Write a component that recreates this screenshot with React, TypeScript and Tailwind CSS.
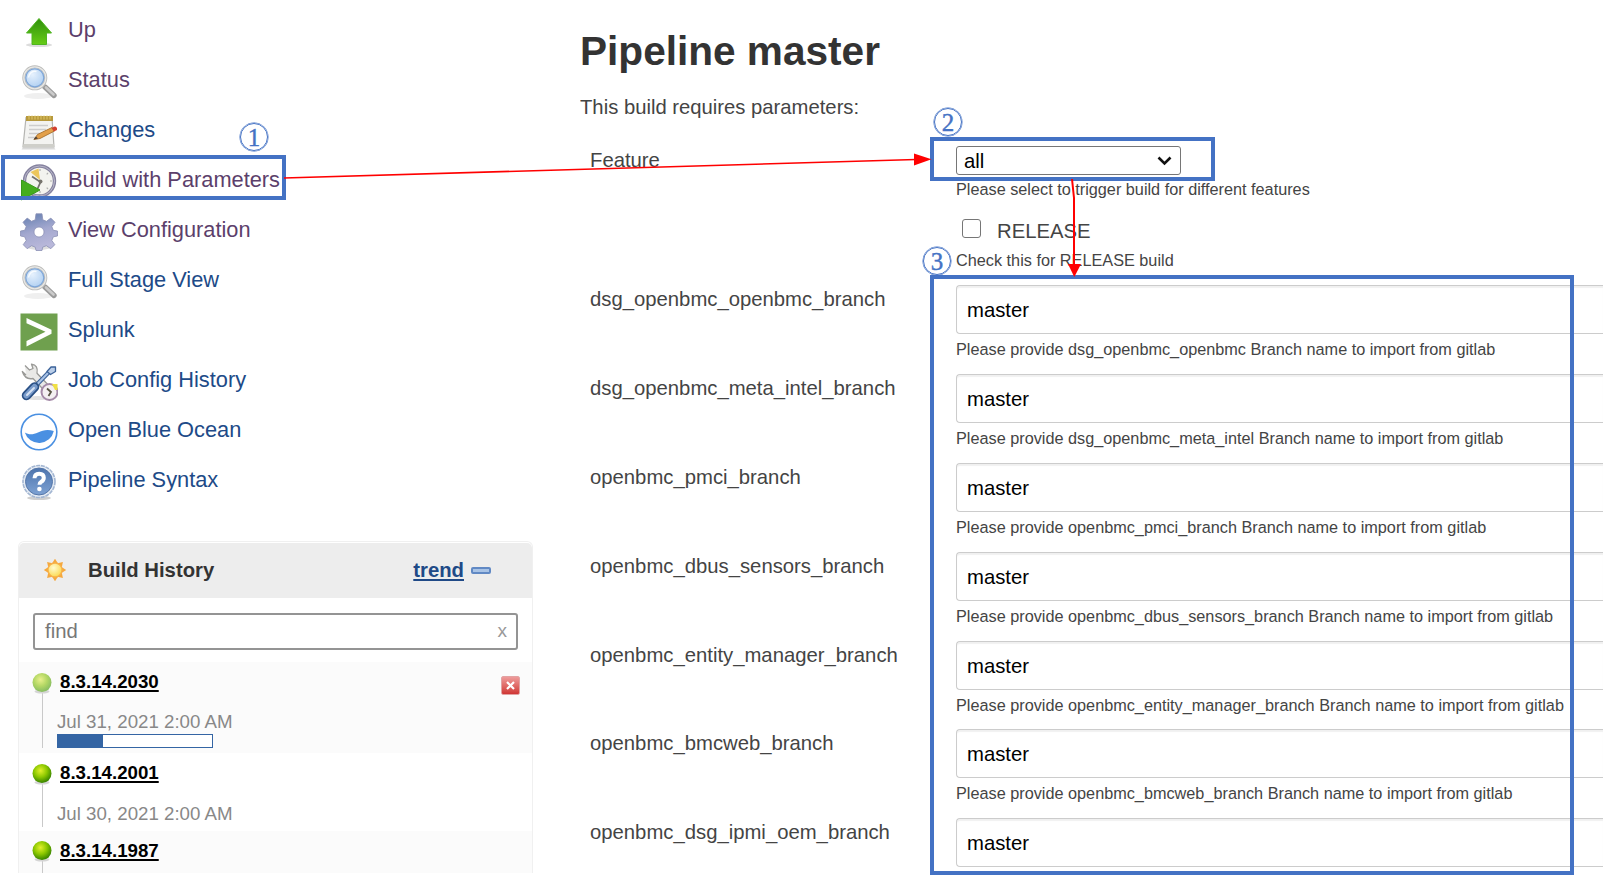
import React from 'react';

function UpIcon() {
  return (
    <svg width="38" height="38" viewBox="0 0 38 38">
      <defs>
        <linearGradient id="up" x1="0" y1="0" x2="0" y2="1">
          <stop offset="0" stopColor="#2f8f0c" />
          <stop offset="1" stopColor="#66cc16" />
        </linearGradient>
      </defs>
      <ellipse cx="19" cy="32" rx="13" ry="2" fill="#dcdcdc" />
      <path d="M19 5.5 31.5 20H26.5V31.5H12V20H6.5Z" fill="url(#up)" stroke="#4fb521" strokeWidth="1" strokeLinejoin="round" />
    </svg>
  );
}

function SearchIcon() {
  return (
    <svg width="38" height="38" viewBox="0 0 38 38">
      <defs>
        <radialGradient id="lens" cx="0.4" cy="0.35" r="0.7">
          <stop offset="0" stopColor="#e6f1fd" />
          <stop offset="1" stopColor="#a9cbf0" />
        </radialGradient>
      </defs>
      <ellipse cx="18" cy="33" rx="14" ry="3" fill="#efefef" />
      <path d="M25 24 34 32.500" stroke="#9b9b9b" strokeWidth="5.400" strokeLinecap="round" />
      <path d="M26 24.500 33.500 31.500" stroke="#cbcbcb" strokeWidth="2.600" strokeLinecap="round" />
      <circle cx="14.800" cy="14.800" r="11" fill="url(#lens)" stroke="#bcbcba" strokeWidth="3" />
      <circle cx="14.800" cy="14.800" r="11" fill="none" stroke="#e8e8e6" strokeWidth="1.300" />
      <circle cx="14.800" cy="14.800" r="9" fill="none" stroke="#7ea6d8" strokeWidth="1.200" />
      <path d="M8.500 14.500a6.500 6.500 0 0 1 8-6" fill="none" stroke="#fff" strokeWidth="1.500" opacity="0.8" />
    </svg>
  );
}

function NotepadIcon() {
  return (
    <svg width="38" height="38" viewBox="0 0 38 38">
      <path d="M3 34.500h31l1.500 2h-34z" fill="#d9d9d9" />
      <path d="M6 4.500h26l2 29.500h-31z" fill="#f3f3f1" stroke="#b5b5b2" strokeWidth="1.200" />
      <path d="M3.500 31h30.500v3H3z" fill="#cfcfca" />
      <path d="M6 3h27v5h-27z" fill="#b7993c" />
      <path d="M9 2.500v4M12 2.500v4M15 2.500v4M18 2.500v4M21 2.500v4M24 2.500v4M27 2.500v4M30 2.500v4" stroke="#e0c768" strokeWidth="1" />
      <path d="M9 12.500h19M9 16.500h17M9 20.500h11M8 24.500h7" stroke="#cdcdcd" strokeWidth="1.300" />
      <path d="M14 26.500 17.500 21.500 32 14.500 34.500 18 20 25.500Z" fill="#e3a04a" stroke="#a8702c" strokeWidth="0.900" />
      <path d="M31.500 15 34.500 13.500q3 0 2.500 3.500L34 18.500Z" fill="#d2402f" />
      <path d="M13.500 26.500 16 23.500 18 25.500Z" fill="#4d4037" />
    </svg>
  );
}

function ClockIcon() {
  return (
    <svg width="38" height="38" viewBox="0 0 38 38">
      <ellipse cx="21" cy="34.500" rx="13" ry="2.500" fill="#d9d9d9" />
      <circle cx="19.500" cy="18" r="15" fill="#f3f3ef" stroke="#85829f" strokeWidth="3.400" />
      <circle cx="19.500" cy="18" r="15" fill="none" stroke="#b9b7ca" strokeWidth="1" />
      <path d="M20 17 10.500 9 18.500 5.500Z" fill="#ecc65b" />
      <path d="M12 13.500 20.500 19 17 27" fill="none" stroke="#75736f" strokeWidth="1.800" />
      <circle cx="20.500" cy="18.500" r="2" fill="#77746e" />
      <path d="M20 6v2M32 18h-2M20 30v-2M28 10l-1.300 1.300M28 26l-1.300-1.300" stroke="#b0b0ae" strokeWidth="1.200" />
      <path d="M1.500 17 20 27 1.500 37Z" fill="#45ad1e" stroke="#3a9a1c" strokeWidth="1" />
    </svg>
  );
}

function GearIcon() {
  return (
    <svg width="38" height="38" viewBox="0 0 38 38">
      <defs>
        <linearGradient id="gear" x1="0" y1="0" x2="0.300" y2="1">
          <stop offset="0" stopColor="#5f7cae" />
          <stop offset="0.550" stopColor="#a3a8cf" />
          <stop offset="1" stopColor="#b9b8da" />
        </linearGradient>
      </defs>
      <ellipse cx="19" cy="34" rx="12" ry="3" fill="#dedede" />
      <path
        fill="url(#gear)"
        fillRule="evenodd"
        stroke="#8b90b5"
        strokeWidth="0.800"
        strokeLinejoin="round"
        d="M16 .8h6l.8 6 3.700 1.500 4.300-3.200 4.200 4.200-3.200 4.300 1.500 3.700 4.200.7v5l-4.200.8-1.500 3.700 3 4.200-4 4-4.400-3-3.700 1.400-.7 3.400h-6l-.8-3.400-3.700-1.400-4.300 3-4-4 3-4.200-1.500-3.700-4.200-.8v-5l4.200-.7 1.500-3.700L3 9.300l4.200-4.200 4.300 3.200 3.700-1.500ZM19 14a5 5 0 1 0 .01 0Z"
      />
    </svg>
  );
}

function SplunkIcon() {
  return (
    <svg width="38" height="38" viewBox="0 0 38 38">
      <rect x="0.500" y="0.500" width="37" height="37" fill="#6fa04e" />
      <path d="M6.500 5 31.500 16.800V20.800L6.500 33.500V28L25.500 18.800 6.500 10.300Z" fill="#fff" />
    </svg>
  );
}

function ToolsIcon() {
  return (
    <svg width="38" height="38" viewBox="0 0 38 38">
      <ellipse cx="18" cy="35" rx="12" ry="2" fill="#e2e2e2" />
      <path
        d="M5 2.500 9.500 7 13 5.500 11.500 1.200q7 1 5.500 9L33 27 28.500 32 13 15.500Q5 17 2.300 8.500L6 12"
        fill="#e9e9e7"
        stroke="#9a9a97"
        strokeWidth="1.300"
        strokeLinejoin="round"
      />
      <path d="M16 22.500 29 9" stroke="#3b6299" strokeWidth="4.200" />
      <path d="M16 22.500 29 9" stroke="#a9c3e6" strokeWidth="2" />
      <path d="M27 8.500 31 4 35.500 4 35.500 8.500 30.500 11.500Z" fill="#b9cde8" stroke="#3b6299" strokeWidth="1.300" strokeLinejoin="round" />
      <path d="M6.500 32.500 14.500 24" stroke="#2b5186" strokeWidth="9.500" strokeLinecap="round" />
      <path d="M6.500 32.500 14.500 24" stroke="#7a9ccb" strokeWidth="6" strokeLinecap="round" />
      <path d="M7 32 14 25" stroke="#d5e1f2" strokeWidth="2" strokeLinecap="round" />
      <circle cx="29.500" cy="29" r="8" fill="#f4f0f2" stroke="#a48aa8" strokeWidth="2" />
      <path d="M32 21h5.500v6h-2.500z" fill="#f0e045" />
      <path d="M27 25.500 31 29 28.500 33" fill="none" stroke="#5a5646" strokeWidth="1.800" />
    </svg>
  );
}

function OceanIcon() {
  return (
    <svg width="38" height="38" viewBox="0 0 38 38">
      <circle cx="19" cy="19" r="17.800" fill="#fff" stroke="#4a90e2" strokeWidth="1.600" />
      <path d="M4.800 19.500C9 22 13 21.700 18 19.500c5-2.600 10-3.500 15.800-1.500A15 15 0 0 1 4.800 19.500Z" fill="#4a90e2" />
    </svg>
  );
}

function HelpIcon() {
  return (
    <svg width="38" height="38" viewBox="0 0 38 38">
      <defs>
        <linearGradient id="help" x1="0" y1="0" x2="0" y2="1">
          <stop offset="0" stopColor="#4d74ad" />
          <stop offset="1" stopColor="#7ea2d3" />
        </linearGradient>
      </defs>
      <ellipse cx="19" cy="35" rx="12" ry="2" fill="#cfcfcf" />
      <circle cx="19" cy="18.500" r="16" fill="#e7edf5" stroke="#a3b6d2" strokeWidth="1.600" strokeDasharray="4 0.800" />
      <circle cx="19" cy="18.500" r="13.500" fill="url(#help)" stroke="#5576a8" strokeWidth="1" />
      <path d="M14.500 15.300q0-4.600 4.700-4.600 4.600 0 4.600 4 0 2.600-2.500 4-1.800 1-1.800 3" fill="none" stroke="#fff" strokeWidth="4" />
      <circle cx="19.400" cy="26" r="2.300" fill="#fff" />
    </svg>
  );
}

function SunIcon() {
  const angles = [0, 45, 90, 135, 180, 225, 270, 315];
  return (
    <svg width="24" height="24" viewBox="0 0 24 24">
      <defs>
        <radialGradient id="sun" cx="0.400" cy="0.350" r="0.700">
          <stop offset="0" stopColor="#fffbd0" />
          <stop offset="1" stopColor="#fbd84a" />
        </radialGradient>
      </defs>
      {angles.map((a) => (
        <path key={a} d="M9 5.500 12 .8 15 5.500Z" fill="#f5a83c" transform={`rotate(${a} 12 12)`} />
      ))}
      <circle cx="12" cy="12" r="7" fill="url(#sun)" stroke="#f7b04a" strokeWidth="1.300" />
    </svg>
  );
}

function Ball({ faded = false }: { faded?: boolean }) {
  const id = faded ? 'ball-faded' : 'ball';
  return (
    <svg className="relative shrink-0" width="20" height="22" viewBox="0 0 20 22">
      <defs>
        <radialGradient id={id} cx="0.420" cy="0.350" r="0.620">
          <stop offset="0" stopColor={faded ? '#e9f08c' : '#e2f02c'} />
          <stop offset="0.550" stopColor={faded ? '#b4d865' : '#8cc800'} />
          <stop offset="1" stopColor={faded ? '#8bbf62' : '#3f8a00'} />
        </radialGradient>
      </defs>
      <ellipse cx="10" cy="19.500" rx="7.500" ry="2" fill="#d5d5d5" />
      <circle cx="10" cy="10.500" r="9.500" fill={`url(#${id})`} />
    </svg>
  );
}

const NAV = [
  { label: 'Up', icon: <UpIcon />, visited: true },
  { label: 'Status', icon: <SearchIcon />, visited: true },
  { label: 'Changes', icon: <NotepadIcon />, visited: false },
  { label: 'Build with Parameters', icon: <ClockIcon />, visited: true },
  { label: 'View Configuration', icon: <GearIcon />, visited: true },
  { label: 'Full Stage View', icon: <SearchIcon />, visited: false },
  { label: 'Splunk', icon: <SplunkIcon />, visited: false },
  { label: 'Job Config History', icon: <ToolsIcon />, visited: false },
  { label: 'Open Blue Ocean', icon: <OceanIcon />, visited: false },
  { label: 'Pipeline Syntax', icon: <HelpIcon />, visited: false },
];

const BRANCHES = [
  { label: 'dsg_openbmc_openbmc_branch', help: 'dsg_openbmc_openbmc' },
  { label: 'dsg_openbmc_meta_intel_branch', help: 'dsg_openbmc_meta_intel' },
  { label: 'openbmc_pmci_branch', help: 'openbmc_pmci_branch' },
  { label: 'openbmc_dbus_sensors_branch', help: 'openbmc_dbus_sensors_branch' },
  { label: 'openbmc_entity_manager_branch', help: 'openbmc_entity_manager_branch' },
  { label: 'openbmc_bmcweb_branch', help: 'openbmc_bmcweb_branch' },
  { label: 'openbmc_dsg_ipmi_oem_branch', help: null },
];

const BUILD_LINK =
  'block text-[18.7px] leading-6 font-bold text-black underline decoration-[1.500px] underline-offset-2';

function Sidebar() {
  return (
    <aside className="w-[580px] shrink-0">
      <nav className="flex flex-col pt-[5px]">
        {NAV.map((n) => (
          <a key={n.label} className="flex h-[49.96px] items-center pl-5">
            <span className="mt-[5px] block size-[38px]">{n.icon}</span>
            <span
              className={
                'pl-[10px] text-[21.8px] leading-[50px] whitespace-nowrap ' +
                (n.visited ? 'text-[#5c3f6b]' : 'text-[#204a87]')
              }
            >
              {n.label}
            </span>
          </a>
        ))}
      </nav>

      <section className="mt-[36px] ml-[18px] w-[515px] overflow-hidden rounded-t-md border border-b-0 border-[#f0f0f0] pt-px">
        <header className="flex h-[55px] items-center rounded-t-[5px] bg-[#ededed] pl-[24px]">
          <SunIcon />
          <h2 className="pl-[21px] text-[20.3px] leading-6 font-bold text-[#333]">Build History</h2>
          <div className="ml-auto flex items-center pr-[41px]">
            <a className="text-[20.3px] leading-6 font-bold text-[#204a87] underline decoration-[1.500px] underline-offset-2">trend</a>
            <span className="ml-[7px] block h-[7px] w-[20px] rounded-[2px] border-2 border-[#6189c4] bg-[#a8c3e6]" />
          </div>
        </header>
        <div className="flex h-[64px] items-center px-[14px]">
          <div className="mt-[3px] flex h-[37px] w-full items-center justify-between rounded-[3px] border-2 border-[#949494] bg-white pr-[9px] pl-[10px]">
            <span className="text-[20.3px] leading-6 text-[#777]">find</span>
            <span className="text-[19px] leading-6 text-[#999]">x</span>
          </div>
        </div>

        <div className="flex h-[91px] bg-[#fbfbfb] pl-[13px]">
          <div className="flex w-5 flex-col items-center pt-[10px]">
            <Ball faded />
            <span className="-mt-[3px] h-[57px] w-px bg-[#c9c9c9]" />
          </div>
          <div className="pl-[5px]">
            <a className={BUILD_LINK + ' mt-[8px] ml-[3px]'}>8.3.14.2030</a>
            <div className="mt-[16px] text-[18.7px] leading-6 whitespace-nowrap text-[#888]">Jul 31, 2021 2:00 AM</div>
            <div className="flex h-[14px] w-[156px] border border-[#3465a4] bg-white">
              <span className="block w-[45px] bg-[#3465a4]" />
            </div>
          </div>
          <span className="mt-[14px] mr-[12px] ml-auto flex size-[19px] items-center justify-center rounded-[2px] border border-[#e2a3a3] bg-linear-to-b from-[#ee9a9a] to-[#cf3434]">
            <svg width="11" height="11" viewBox="0 0 11 11">
              <path d="M2 2 9 9M9 2 2 9" stroke="#fff" strokeWidth="2.200" />
            </svg>
          </span>
        </div>

        <div className="flex h-[78px] bg-white pl-[13px]">
          <div className="flex w-5 flex-col items-center pt-[10px]">
            <Ball />
            <span className="-mt-[2px] h-[44px] w-px bg-[#c9c9c9]" />
          </div>
          <div className="pl-[5px]">
            <a className={BUILD_LINK + ' mt-[8px] ml-[3px]'}>8.3.14.2001</a>
            <div className="mt-[17px] text-[18.7px] leading-6 whitespace-nowrap text-[#888]">Jul 30, 2021 2:00 AM</div>
          </div>
        </div>

        <div className="flex h-[42px] bg-[#fbfbfb] pl-[13px]">
          <div className="flex w-5 flex-col items-center pt-[9px]">
            <Ball />
            <span className="-mt-[2px] h-[14px] w-px shrink-0 bg-[#c9c9c9]" />
          </div>
          <a className={BUILD_LINK + ' mt-[8px] ml-[8px]'}>8.3.14.1987</a>
        </div>
      </section>
    </aside>
  );
}

function Main() {
  return (
    <main className="min-w-0 flex-1 overflow-hidden pt-[26px] text-[#444]">
      <h1 className="text-[40.6px] leading-[50px] font-bold whitespace-nowrap text-[#333]">Pipeline master</h1>
      <p className="mt-[19px] text-[20.25px] leading-6">This build requires parameters:</p>

      <div className="mt-[27px] flex h-[139px] pl-[10px]">
        <div className="w-[366px] shrink-0 pt-[2px] text-[20.3px] leading-6">Feature</div>
        <div className="flex-1">
          <div className="flex h-[29px] w-[225px] items-center justify-between rounded-[3px] border border-[#767676] bg-white pr-[8px] pl-[7px] text-black">
            <span className="text-[20.3px] leading-6">all</span>
            <svg width="15" height="10" viewBox="0 0 15 10">
              <path d="M1.500 1.500 7.500 7.500 13.500 1.500" fill="none" stroke="#111" strokeWidth="2.600" />
            </svg>
          </div>
          <div className="mt-[4px] text-[16.25px] leading-5 whitespace-nowrap">Please select to trigger build for different features</div>
          <div className="mt-[17px] flex h-[30px] items-center pl-[6px]">
            <span className="mb-[6px] block size-[19px] rounded-[3px] border-[1.500px] border-[#767676] bg-white" />
            <span className="pl-4 text-[20.3px] leading-[30px]">RELEASE</span>
          </div>
          <div className="mt-[4px] text-[16.25px] leading-5 whitespace-nowrap">Check this for RELEASE build</div>
        </div>
      </div>

      {BRANCHES.map(({ label, help }) => (
        <div key={label} className="flex h-[88.9px] pl-[10px]">
          <div className="w-[366px] shrink-0 pt-[2px] text-[20.3px] leading-6">{label}</div>
          <div className="min-w-0 flex-1">
            <div className="flex h-[49px] items-center rounded-l-[4px] border border-r-0 border-[#ccc] bg-white pt-[1.500px] pl-[10px] text-[20.3px] text-black shadow-[inset_0_2px_1px_rgba(0,0,0,0.06)]">
              master
            </div>
            {help && (
              <div className="mt-[5px] text-[16.25px] leading-5 whitespace-nowrap">
                Please provide {help} Branch name to import from gitlab
              </div>
            )}
          </div>
        </div>
      ))}
    </main>
  );
}

const BADGE =
  'absolute flex size-[28px] items-center justify-center rounded-full border border-[#4472c4] font-["Liberation_Serif",serif] text-[25px] leading-none text-[#4472c4] shadow-[0_0_0_0.5px_#4472c4] [-webkit-text-stroke:0.4px_#4472c4]';

function Annotations() {
  return (
    <>
      <div className="absolute top-[155px] left-[1px] h-[45px] w-[285px] border-4 border-[#4472c4]" />
      <div className="absolute top-[137px] left-[930px] h-[44px] w-[285px] border-4 border-[#4472c4]" />
      <div className="absolute top-[275px] left-[930px] h-[600px] w-[644px] border-4 border-[#4472c4]" />
      <span className={BADGE + ' top-[123px] left-[240px]'}>1</span>
      <span className={BADGE + ' top-[108px] left-[934px]'}>2</span>
      <span className={BADGE + ' top-[247px] left-[923px]'}>3</span>
      <svg className="absolute top-0 left-0" width="1603" height="876" viewBox="0 0 1603 876">
        <path d="M284 178 916 159.500" fill="none" stroke="#ff0000" strokeWidth="1.600" />
        <path d="M914 153.500 931.500 159.300 914 165.500Z" fill="#ff0000" />
        <path d="M1072 179 1074 198V267" fill="none" stroke="#ff0000" strokeWidth="2" />
        <path d="M1068 264H1081L1074.300 277Z" fill="#ff0000" />
      </svg>
    </>
  );
}

export default function App() {
  return (
    <div className='relative flex h-[876px] w-[1603px] overflow-hidden bg-white font-["Liberation_Sans",Arial,sans-serif]'>
      <Sidebar />
      <Main />
      <Annotations />
    </div>
  );
}
